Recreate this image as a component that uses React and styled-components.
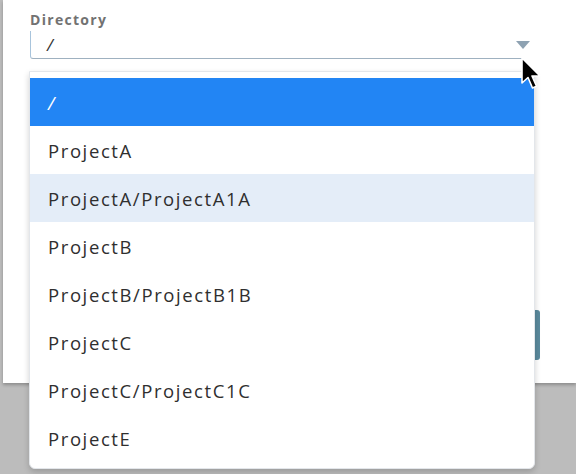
import React from 'react'
import styled, { createGlobalStyle } from 'styled-components'

const Global = createGlobalStyle`
  html, body { margin: 0; padding: 0; }
  body {
    width: 576px;
    height: 474px;
    overflow: hidden;
    background: #bcbcbc;
    font-family: 'Open Sans', 'Noto Sans', sans-serif;
  }
`

const Page = styled.div`
  position: relative;
  width: 576px;
  height: 474px;
  background: #bcbcbc;
`

const Modal = styled.div`
  margin-left: 3px;
  height: 383px;
  background: #fff;
  box-shadow: 0 2px 3px rgba(0, 0, 0, 0.25);
  display: flex;
  flex-direction: column;
  padding: 10px 46px 0 27px;
  box-sizing: border-box;
`

const Label = styled.div`
  font-size: 14px;
  font-weight: 700;
  color: #727272;
  letter-spacing: 1.3px;
  line-height: 19px;
`

const SelectBox = styled.div`
  position: relative;
  margin-top: 2px;
  width: 492px;
`

const Input = styled.div`
  height: 27px;
  border-left: 1px solid #a8c4dc;
  border-bottom: 1px solid #9fb1c0;
  border-bottom-left-radius: 3px;
  padding-left: 16px;
  font-size: 17px;
  font-style: italic;
  color: #333;
  line-height: 27px;
`

const Caret = styled.span`
  position: absolute;
  right: -8px;
  top: 10px;
  width: 0;
  height: 0;
  border-left: 7px solid transparent;
  border-right: 7px solid transparent;
  border-top: 8px solid #8ea2b2;
`

const Menu = styled.ul`
  position: absolute;
  z-index: 5;
  top: 40px;
  left: -1px;
  width: 504px;
  margin: 0;
  padding: 6px 0 6px;
  list-style: none;
  background: #fff;
  border: 1px solid #e3e6ea;
  border-radius: 0 0 6px 6px;
  box-shadow: 0 3px 6px rgba(0, 0, 0, 0.18);
`

const Option = styled.li`
  height: 48px;
  padding-left: 18px;
  display: flex;
  align-items: center;
  font-size: 18.5px;
  letter-spacing: 1.6px;
  color: ${p => (p.$selected ? '#fff' : '#2f2f2f')};
  background: ${p => (p.$selected ? '#2285f4' : p.$hover ? '#e4edf8' : 'transparent')};
  font-style: ${p => (p.$selected ? 'italic' : 'normal')};
`

const Footer = styled.div`
  margin-top: auto;
  margin-bottom: 23px;
  display: flex;
  justify-content: flex-end;
  margin-right: -10px;
`

const Button = styled.button`
  width: 90px;
  height: 50px;
  border: none;
  border-radius: 3px;
  background: #5b8a9d;
`

const Pointer = styled.svg`
  position: absolute;
  left: 520px;
  top: 57px;
  z-index: 10;
`

const items = [
  '/',
  'ProjectA',
  'ProjectA/ProjectA1A',
  'ProjectB',
  'ProjectB/ProjectB1B',
  'ProjectC',
  'ProjectC/ProjectC1C',
  'ProjectE',
]

const App = () => {
  return (
    <Page>
      <Global />
      <Modal>
        <Label>Directory</Label>
        <SelectBox>
          <Input>/</Input>
          <Caret />
          <Menu>
            {items.map((it, i) => (
              <Option key={it} $selected={i === 0} $hover={i === 2}>
                {it}
              </Option>
            ))}
          </Menu>
        </SelectBox>
        <Footer>
          <Button />
        </Footer>
      </Modal>
      <Pointer width="24" height="34" viewBox="0 0 24 34">
        <path
          d="M2 1 L2 26 L8 20.5 L12.5 31 L16.5 29.3 L12 19 L20 19 Z"
          fill="#000"
          stroke="#fff"
          strokeWidth="1.6"
          strokeLinejoin="round"
        />
      </Pointer>
    </Page>
  )
}

export default App
